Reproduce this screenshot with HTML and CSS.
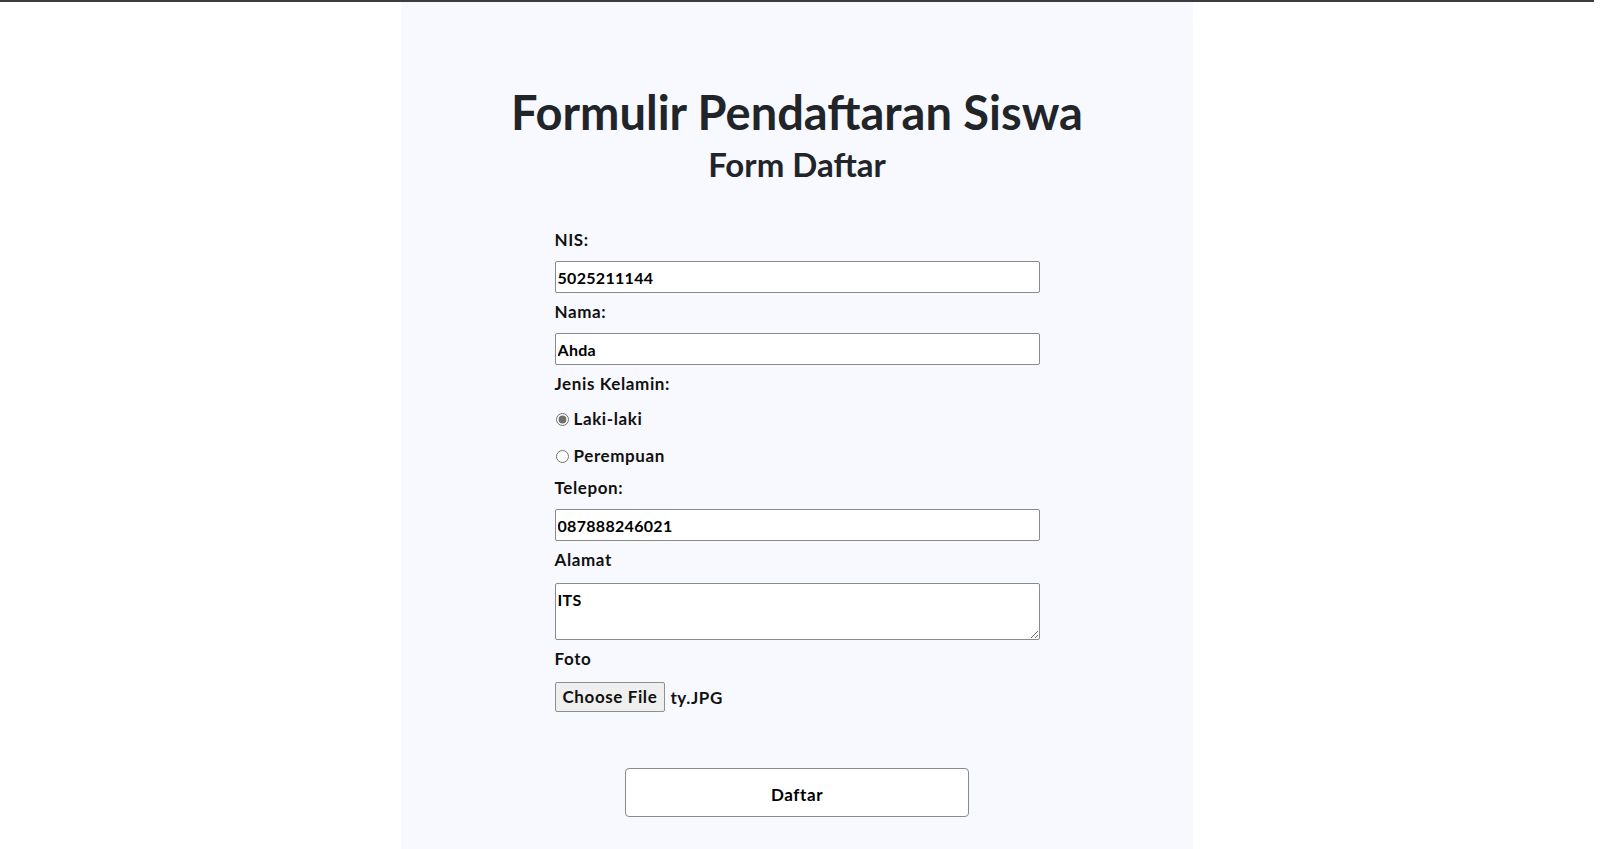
FILE: index.html
```html
<!DOCTYPE html>
<html lang="id">
<head>
    <meta charset="UTF-8">
    <meta name="viewport" content="width=device-width, initial-scale=1.0">
    <title>Formulir Pendaftaran Siswa</title>
    <link rel="stylesheet" href="styles.css">
</head>
<body>
    <div class="container">
        <h1>Formulir Pendaftaran Siswa</h1>
        <h2>Form Daftar</h2>
        <form id="daftar-form">
            <label for="nis">NIS:</label>
            <input type="text" id="nis" name="nis" value="5025211144">

            <label for="nama">Nama:</label>
            <input type="text" id="nama" name="nama" value="Ahda">

            <label>Jenis Kelamin:</label>
            <div class="radio-group">
                <label class="radio"><input type="radio" name="jenis_kelamin" value="laki-laki" checked> Laki-laki</label>
                <label class="radio"><input type="radio" name="jenis_kelamin" value="perempuan"> Perempuan</label>
            </div>

            <label for="telepon">Telepon:</label>
            <input type="text" id="telepon" name="telepon" value="087888246021">

            <label for="alamat">Alamat</label>
            <textarea id="alamat" name="alamat">ITS</textarea>

            <label>Foto</label>
            <div class="file-row">
                <label for="foto" class="file-btn">Choose File</label>
                <input type="file" id="foto" name="foto" hidden>
                <span class="file-name">ty.JPG</span>
            </div>

            <div class="submit-row">
                <button type="submit">Daftar</button>
            </div>
        </form>
    </div>
</body>
</html>
```

FILE: styles.css
```css
html, body {
    margin: 0;
    padding: 0;
}

::-webkit-scrollbar {
    width: 16px;
    height: 16px;
    background-color: #f1f1f1;
}

::-webkit-scrollbar-thumb {
    background-color: #8b8b8b;
    border-radius: 8px;
    border: 4px solid #f1f1f1;
}

body {
    font-family: Lato, "Open Sans", sans-serif;
    font-weight: 700;
    background-color: #fff;
    color: #111;
    border-top: 2px solid #3c3c3c;
    width: 1594px;
}

.container {
    width: 792px;
    margin: 0 auto;
    background-color: #f8f9fe;
    padding: 84px 0 140px;
}

h1 {
    text-align: center;
    font-size: 47px;
    line-height: 53px;
    margin: 0;
    color: #212529;
}

h2 {
    text-align: center;
    font-size: 33px;
    line-height: 36px;
    margin: 7px 0 0;
    color: #212529;
}

form {
    display: flex;
    flex-direction: column;
    width: 485px;
    margin: 48px auto 0;
}

form label {
    font-size: 17px;
    letter-spacing: 0.6px;
    line-height: 20px;
    margin-bottom: 11px;
}

form input[type="text"], form textarea {
    font-family: inherit;
    font-weight: 700;
    font-size: 16px;
    letter-spacing: 0.3px;
    color: #000;
    background: #fff;
    border: 1px solid #8a8a8a;
    border-radius: 2px;
    padding: 0 2px;
    margin: 0 0 9px;
    height: 32px;
    box-sizing: border-box;
    outline: none;
}

form textarea {
    height: 57px;
    padding: 6px 2px;
    resize: vertical;
    margin-top: 2px;
}

.radio-group {
    display: flex;
    flex-direction: column;
    gap: 17px;
    padding: 4px 0 12px;
}

.radio-group .radio {
    display: flex;
    align-items: center;
    margin: 0;
}

.radio input {
    width: 13px;
    height: 13px;
    margin: 0 5px 0 1px;
    accent-color: #6e6e6e;
}

.file-row {
    display: flex;
    align-items: center;
    margin-top: 2px;
}

.file-row .file-btn {
    margin: 0 5px 0 0;
    padding: 0 7px;
    height: 30px;
    line-height: 28px;
    box-sizing: border-box;
    background-color: #efefef;
    border: 1px solid #8f8f8f;
    border-radius: 2px;
    cursor: pointer;
}

.file-name {
    font-size: 17px;
    letter-spacing: 0.6px;
}

.submit-row {
    display: flex;
    justify-content: center;
    margin-top: 56px;
}

.submit-row button {
    width: 344px;
    height: 49px;
    padding-top: 4px;
    font-family: inherit;
    font-weight: 700;
    font-size: 17px;
    letter-spacing: 0.6px;
    color: #000;
    background-color: #fff;
    border: 1px solid #8a8a8a;
    border-radius: 4px;
    cursor: pointer;
}
```
